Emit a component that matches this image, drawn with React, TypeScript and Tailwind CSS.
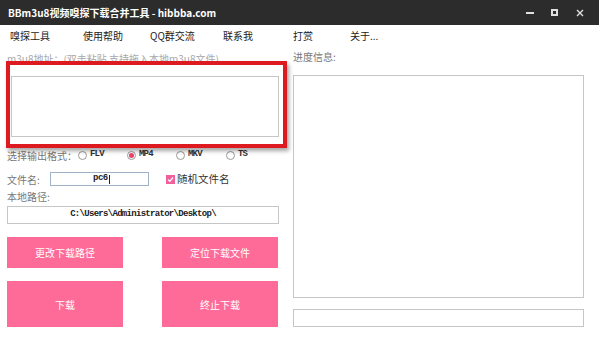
import React from "react";

const cjk = { fontFamily: '"Noto Sans CJK SC", "Noto Sans", sans-serif' };
const mono = { fontFamily: '"Liberation Mono", "Noto Sans CJK SC", monospace' };

const Radio = ({ label, checked, className }: { label: string; checked?: boolean; className?: string }) => (
  <div className={`flex items-center ${className ?? ""}`}>
    <span className="w-[9px] h-[9px] rounded-full border border-[#9a9a9a] bg-white flex items-center justify-center">
      {checked && <span className="w-[5px] h-[5px] rounded-full bg-[#f0406e]" />}
    </span>
    <span className="ml-[3px] text-[9px] font-bold text-[#333] tracking-[-0.8px]" style={mono}>
      {label}
    </span>
  </div>
);

const PinkButton = ({ text, h }: { text: string; h: string }) => (
  <div className={`w-[116px] ${h} bg-[#ff6b98] flex items-center justify-center text-white text-[10px]`}>{text}</div>
);

export default function App() {
  return (
    <div className="relative w-[599px] h-[339px] bg-white overflow-hidden" style={cjk}>
      {/* title bar */}
      <div className="h-[25px] bg-[#2c2c2c] flex items-center pl-[8px] text-white text-[10px] font-bold">
        <span>BBm3u8视频嗅探下载合并工具 - hibbba.com</span>
        <div className="ml-auto flex items-center">
          <span className="w-[8px] h-[2px] bg-[#e0e0e0]" />
          <span className="ml-[17px] w-[7px] h-[7px] border-[2px] border-[#e0e0e0]" />
          <svg className="ml-[18px] mr-[15px]" width="8" height="8" viewBox="0 0 8 8">
            <path d="M1 1 L7 7 M7 1 L1 7" stroke="#e0e0e0" strokeWidth="1.4" />
          </svg>
        </div>
      </div>

      {/* menu */}
      <div className="h-[20px] flex items-center pl-[10px] text-[10px] text-[#222]">
        <span className="w-[73px]">嗅探工具</span>
        <span className="w-[67px]">使用帮助</span>
        <span className="w-[73px]">QQ群交流</span>
        <span className="w-[70px]">联系我</span>
        <span className="w-[57px]">打赏</span>
        <span>关于...</span>
      </div>

      <div className="flex">
        {/* left */}
        <div className="w-[290px] pl-[7px] flex flex-col">
          <div className="mt-[8px] h-[12px] leading-[12px] text-[10px] text-[#a8a8a8]">
            m3u8地址：(双击粘贴 支持拖入本地m3u8文件)
          </div>
          <div className="mt-[11px] ml-[4px] w-[268px] h-[61px] border border-[#c6c6c6] bg-white" />

          <div className="mt-[12px] h-[12px] flex items-center text-[10px] text-[#777]">
            <span className="w-[71px]">选择输出格式：</span>
            <Radio label="FLV" className="w-[49px]" />
            <Radio label="MP4" checked className="w-[49px]" />
            <Radio label="MKV" className="w-[50px]" />
            <Radio label="TS" />
          </div>

          <div className="mt-[11px] h-[14px] flex items-center">
            <span className="w-[43px] text-[10px] text-[#777]">文件名:</span>
            <div className="w-[99px] h-[14px] border border-[#9fb2c6] bg-white flex items-center pl-[42px]">
              <span className="text-[9px] font-bold text-[#222] tracking-[-0.5px]" style={mono}>
                pc6
              </span>
              <span className="ml-[1px] w-px h-[9px] bg-[#222]" />
            </div>
            <div className="ml-[17px] flex items-center">
              <span className="w-[9px] h-[9px] bg-[#f0609a] flex items-center justify-center">
                <svg width="7" height="7" viewBox="0 0 7 7">
                  <path d="M1 3.6 L2.8 5.3 L6 1.5" stroke="white" strokeWidth="1.3" fill="none" />
                </svg>
              </span>
              <span className="ml-[2px] text-[10.5px] text-[#333]">随机文件名</span>
            </div>
          </div>

          <div className="mt-[5px] h-[12px] leading-[12px] text-[10px] text-[#777]">本地路径:</div>

          <div className="mt-[3px] w-[272px] h-[18px] border border-[#c6c6c6] bg-white flex items-center justify-center">
            <span className="text-[9px] font-bold text-[#222] tracking-[-0.7px]" style={mono}>
              C:\Users\Administrator\Desktop\
            </span>
          </div>

          <div className="mt-[13px] flex gap-[39px]">
            <PinkButton text="更改下载路径" h="h-[31px]" />
            <PinkButton text="定位下载文件" h="h-[31px]" />
          </div>
          <div className="mt-[13px] flex gap-[39px]">
            <PinkButton text="下载" h="h-[46px]" />
            <PinkButton text="终止下载" h="h-[46px]" />
          </div>
        </div>

        {/* right */}
        <div className="pl-[3px] flex flex-col">
          <div className="mt-[6px] h-[12px] leading-[12px] text-[10px] text-[#777]">进度信息:</div>
          <div className="mt-[12px] w-[291px] h-[223px] border border-[#c6c6c6] bg-white" />
          <div className="mt-[11px] w-[291px] h-[18px] border border-[#c6c6c6] bg-white" />
        </div>
      </div>

      {/* red annotation box */}
      <div className="absolute left-[6px] top-[61px] w-[281px] h-[87px] border-[4px] border-[#dc1a20] shadow-[2px_3px_4px_rgba(0,0,0,0.35)]" />
    </div>
  );
}
